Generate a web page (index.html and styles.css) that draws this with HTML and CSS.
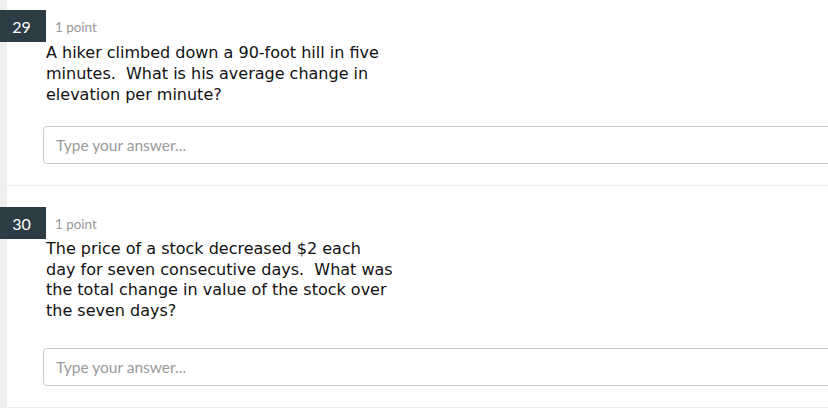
FILE: index.html
```html
<!DOCTYPE html>
<html>
<head>
<meta charset="utf-8">
<link rel="stylesheet" href="styles.css">
</head>
<body>
<div class="page">
  <section class="question first">
    <div class="header">
      <div class="badge">29</div>
      <div class="points">1 point</div>
    </div>
    <p class="text">A hiker climbed down a 90-foot hill in five<br>minutes.&nbsp; What is his average change in<br>elevation per minute?</p>
    <div class="answer">Type your answer...</div>
  </section>
  <section class="question second">
    <div class="header">
      <div class="badge">30</div>
      <div class="points">1 point</div>
    </div>
    <p class="text">The price of a stock decreased $2 each<br>day for seven consecutive days.&nbsp; What was<br>the total change in value of the stock over<br>the seven days?</p>
    <div class="answer">Type your answer...</div>
  </section>
</div>
</body>
</html>
```

FILE: styles.css
```css
html, body {
  margin: 0;
  padding: 0;
  background: #ffffff;
  overflow: hidden;
}
.page {
  width: 828px;
  height: 408px;
  overflow: hidden;
}
.question {
  background: #fff;
  border-left: 7px solid #efefef;
  padding-bottom: 21px;
  position: relative;
}
.question::after {
  content: "";
  display: block;
  height: 1px;
  background: #ededed;
  margin-top: 21px;
  margin-bottom: -21px;
}
.question.first {
  padding-top: 10px;
}
.question.second {
  padding-top: 21px;
}
.header {
  display: flex;
  align-items: center;
  height: 32px;
}
.badge {
  margin-left: -7px;
  width: 46px;
  height: 32px;
  flex: none;
  background: #2d3b45;
  color: #fff;
  font-family: Lato, "Liberation Sans", sans-serif;
  font-size: 16px;
  display: flex;
  align-items: center;
  justify-content: center;
  box-sizing: border-box;
  padding-right: 3px;
}
.points {
  margin-left: 9px;
  color: #999;
  font-family: Lato, "Liberation Sans", sans-serif;
  font-size: 13.4px;
  position: relative;
  top: 1px;
}
.text {
  margin: 0 0 0 39px;
  font-family: "DejaVu Sans", sans-serif;
  font-size: 16px;
  line-height: 21px;
  color: #111;
}
.second .text {
  line-height: 20.7px;
}
.answer {
  margin: 21px 0 0 36px;
  width: 820px;
  height: 38px;
  box-sizing: border-box;
  border: 1px solid #cccccc;
  border-radius: 4px;
  padding-left: 12px;
  display: flex;
  align-items: center;
  font-family: Lato, "Liberation Sans", sans-serif;
  font-size: 15.5px;
  color: #9a9a9a;
}
.second .answer {
  margin-top: 26px;
}
```
